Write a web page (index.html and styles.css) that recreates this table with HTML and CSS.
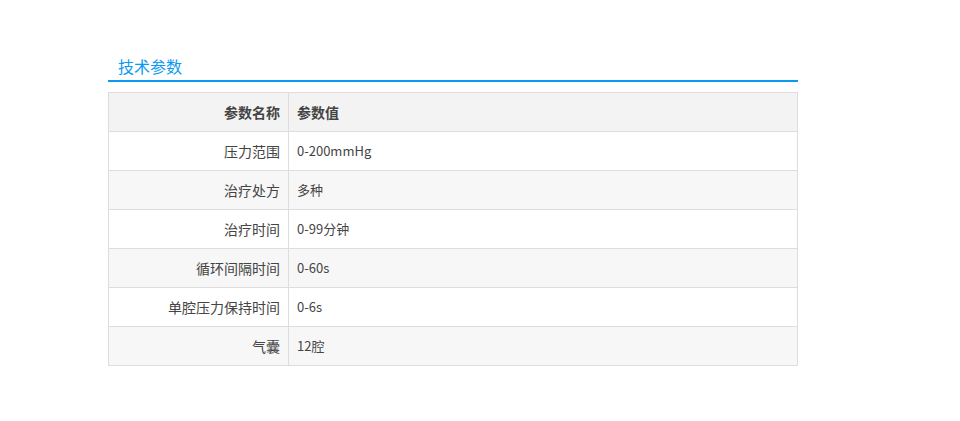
FILE: index.html
```html
<!DOCTYPE html>
<html lang="zh-CN">
<head>
    <meta charset="UTF-8">
    <meta name="viewport" content="width=device-width, initial-scale=1.0">
    <title>技术参数</title>
    <link rel="stylesheet" href="styles.css">
</head>
<body>
    <div class="container">
        <div class="spec-block">
            <h3 class="spec-title">技术参数</h3>

            <table class="spec-table">
                <thead>
                    <tr>
                        <th class="col-name">参数名称</th>
                        <th class="col-value">参数值</th>
                    </tr>
                </thead>
                <tbody>
                    <tr>
                        <td class="col-name">压力范围</td>
                        <td class="col-value">0-200mmHg</td>
                    </tr>
                    <tr>
                        <td class="col-name">治疗处方</td>
                        <td class="col-value">多种</td>
                    </tr>
                    <tr>
                        <td class="col-name">治疗时间</td>
                        <td class="col-value">0-99分钟</td>
                    </tr>
                    <tr>
                        <td class="col-name">循环间隔时间</td>
                        <td class="col-value">0-60s</td>
                    </tr>
                    <tr>
                        <td class="col-name">单腔压力保持时间</td>
                        <td class="col-value">0-6s</td>
                    </tr>
                    <tr>
                        <td class="col-name">气囊</td>
                        <td class="col-value">12腔</td>
                    </tr>
                </tbody>
            </table>
        </div>
    </div>
</body>
</html>
```

FILE: styles.css
```css
:root {
    --primary: #0a9af2;
    --text: #333333;
    --border: #dddddd;
    --head-bg: #f3f3f3;
    --stripe: #f7f7f7;
    --white: #FFFFFF;
}

* {
    margin: 0;
    padding: 0;
    box-sizing: border-box;
    font-family: "Noto Sans CJK SC", "Liberation Sans", sans-serif;
}

body {
    background-color: var(--white);
    color: var(--text);
}

.container {
    padding: 52px 0 0 108px;
}

.spec-block {
    width: 690px;
}

.spec-title {
    font-size: 16px;
    font-weight: normal;
    color: var(--primary);
    line-height: 28px;
    padding-left: 10px;
    border-bottom: 2px solid var(--primary);
}

.spec-table {
    width: 100%;
    margin-top: 10px;
    border-collapse: collapse;
    font-size: 14px;
}

.spec-table th,
.spec-table td {
    border: 1px solid var(--border);
    height: 39px;
    padding: 0 8px;
    line-height: 20px;
}

.spec-table th {
    background-color: var(--head-bg);
    font-weight: bold;
    color: #444444;
}

.spec-table td {
    color: #444444;
}

.spec-table tbody tr:nth-child(even) td {
    background-color: var(--stripe);
}

.col-name {
    width: 180px;
    text-align: right;
}

.col-value {
    text-align: left;
}

.spec-table td.col-value {
    font-size: 13px;
}
```
